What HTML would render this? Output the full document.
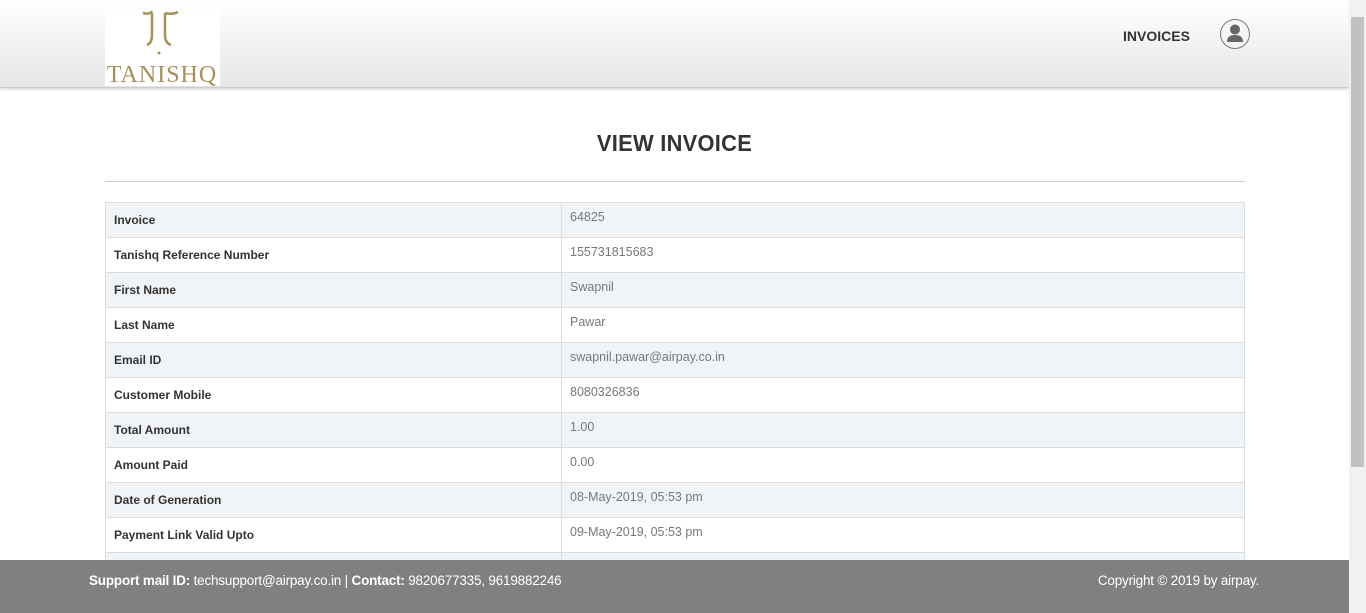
<!DOCTYPE html>
<html><head><meta charset="utf-8"><style>
body{margin:0;width:1366px;height:613px;overflow:hidden;font-family:"Liberation Sans",sans-serif;background:#fff;position:relative}
.hdr{position:absolute;left:0;top:0;width:1349px;height:87px;background:linear-gradient(#fff,#e6e6e6);border-bottom:1px solid #ccc;box-shadow:0 1px 3px rgba(0,0,0,.2)}
.logo{position:absolute;left:105px;top:9px;width:115px;height:77px;background:#fff}
.nav{position:absolute;left:1123px;top:28px;font-size:14px;font-weight:bold;color:#333}
.user{position:absolute;left:1220px;top:19px;width:28px;height:28px;border:1.5px solid #777;border-radius:50%}
.sb{position:absolute;left:1349px;top:0;width:17px;height:613px;background:#f1f1f1;z-index:3}
.sb div{position:absolute;left:2px;top:17px;width:13px;height:450px;background:#c1c1c1}
h1{position:absolute;left:0;width:1349px;top:130px;margin:0;text-align:center;font-size:23px;color:#333;letter-spacing:.3px;transform:scaleX(.95)}
.hr{position:absolute;left:105px;top:181px;width:1140px;border-top:1px solid #ccc}
table{position:absolute;left:105px;top:202px;width:1140px;border-collapse:collapse;font-size:12px}
tr{height:35px}
td{border:1px solid #ddd;height:34px;padding:0 8px;vertical-align:top;box-sizing:border-box;line-height:14px}
td:first-child{width:456px;font-weight:bold;color:#333;padding-top:10px}
td:last-child{color:#777;padding-top:7px;font-size:12.5px}
tr:nth-child(odd){background:#f1f4f7}
.ft{position:absolute;left:0;top:560px;width:1349px;height:53px;background:#808080;color:#fff;font-size:13.5px;z-index:2}
.ft .l{position:absolute;left:89px;top:13px;letter-spacing:-.2px}.ft .r{position:absolute;right:90px;top:13px;letter-spacing:-.2px}
</style></head><body>
<div class="hdr">
<div class="logo"><svg width="115" height="77" viewBox="0 0 115 77"><g fill="none" stroke="#a88f5a" stroke-width="2.5"><path d="M38 4 Q45 6 47 2 M47 4 L47 26 Q47 34 42 36 M60 4 Q67 6 73 3 M60 4 L60 26 Q60 34 66 36"/></g><circle cx="54" cy="44" r="1.5" fill="#a88f5a"/><text x="57" y="73" text-anchor="middle" font-family="Liberation Serif,serif" font-size="24" fill="#a88f5a" letter-spacing="1">TANISHQ</text></svg></div>
<div class="nav">INVOICES</div>
<div class="user"><svg width="28" height="28" viewBox="0 0 28 28"><circle cx="14" cy="9.5" r="5" fill="#666"/><path d="M6 22 Q6 15 14 15 Q22 15 22 22 Z" fill="#666"/></svg></div>
</div>
<h1>VIEW INVOICE</h1>
<div class="hr"></div>
<table>
<tr><td>Invoice</td><td>64825</td></tr>
<tr><td>Tanishq Reference Number</td><td>155731815683</td></tr>
<tr><td>First Name</td><td>Swapnil</td></tr>
<tr><td>Last Name</td><td>Pawar</td></tr>
<tr><td>Email ID</td><td>swapnil.pawar@airpay.co.in</td></tr>
<tr><td>Customer Mobile</td><td>8080326836</td></tr>
<tr><td>Total Amount</td><td>1.00</td></tr>
<tr><td>Amount Paid</td><td>0.00</td></tr>
<tr><td>Date of Generation</td><td>08-May-2019, 05:53 pm</td></tr>
<tr><td>Payment Link Valid Upto</td><td>09-May-2019, 05:53 pm</td></tr>
<tr><td>&nbsp;</td><td>&nbsp;</td></tr>
</table>
<div class="ft"><div class="l"><b>Support mail ID:</b> techsupport@airpay.co.in | <b>Contact:</b> 9820677335, 9619882246</div><div class="r">Copyright © 2019 by airpay.</div></div>
<div class="sb"><div></div></div>
</body></html>
